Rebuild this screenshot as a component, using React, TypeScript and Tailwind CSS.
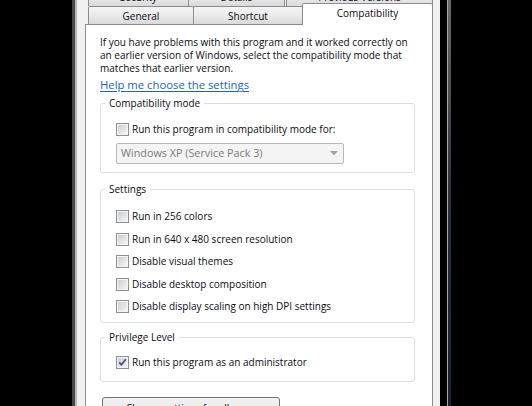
import React from 'react';

type CheckProps = { checked?: boolean };

const CheckBox: React.FC<CheckProps> = ({ checked = false }) => (
  <svg width="13" height="13" viewBox="0 0 13 13" className="shrink-0">
    <defs>
      <linearGradient id="cbFill" x1="0" y1="0" x2="1" y2="1">
        <stop offset="0" stopColor="#c9cdd3" />
        <stop offset="1" stopColor="#f6f6f6" />
      </linearGradient>
    </defs>
    <rect x="0.5" y="0.5" width="12" height="12" fill="#f4f4f4" stroke="#8e8f8f" />
    <rect x="2" y="2" width="9" height="9" fill="url(#cbFill)" />
    {checked && (
      <path d="M3.2 6.4 L5.4 8.8 L9.8 3.2" stroke="#3b4f86" strokeWidth="1.7" fill="none" />
    )}
  </svg>
);

const Option: React.FC<{ label: string; checked?: boolean }> = ({ label, checked }) => (
  <div className="flex items-center h-[13px] gap-[3px]">
    <CheckBox checked={checked} />
    <span className="whitespace-nowrap">{label}</span>
  </div>
);

const Group: React.FC<{ title: string; className?: string; children: React.ReactNode }> = ({
  title,
  className = '',
  children,
}) => (
  <fieldset className={`w-[315px] border border-[#d5dfe5] rounded-[3px] pl-[15px] ${className}`}>
    <legend className="ml-[-11px] px-[4px] leading-[13px]">{title}</legend>
    {children}
  </fieldset>
);

const tabIdle =
  'h-[18px] flex items-center justify-center border border-b-0 border-[#898c95] rounded-t-[2px] bg-linear-to-b from-[#f4f4f4] via-[#ebebeb] to-[#d9d9d9]';

export default function App() {
  const settings = [
    'Run in 256 colors',
    'Run in 640 x 480 screen resolution',
    'Disable visual themes',
    'Disable desktop composition',
    'Disable display scaling on high DPI settings',
  ];

  return (
    <div className="flex w-[532px] h-[406px] overflow-hidden bg-black text-[10px] text-[#0a0a14] font-['Open_Sans',sans-serif]">
      <div className="w-[72px] shrink-0" />
      <div className="w-[3px] shrink-0 bg-[#474747]" />
      <div className="w-[2px] shrink-0 bg-[#b9b9b9]" />

      <div className="w-[363px] shrink-0 bg-[#f0f0f0] pl-[8px] flex flex-col">
        {/* tab strip */}
        <div className="h-[24px] flex flex-col">
          <div className="h-[18px] mt-[-12px] flex pl-[3px] shrink-0">
            <div className={`${tabIdle} w-[101px]`}>Security</div>
            <div className={`${tabIdle} w-[97px] -ml-px`}>Details</div>
            <div className={`${tabIdle} w-[147px] ml-[1px]`}>Previous Versions</div>
          </div>
          <div className="h-[18px] flex items-end pl-[3px] shrink-0">
            <div className={`${tabIdle} w-[106px] pt-[2px]`}>General</div>
            <div className={`${tabIdle} w-[110px] -ml-px pt-[2px]`}>Shortcut</div>
            <div className="relative z-10 -ml-px -mb-px h-[22px] w-[131px] flex items-center justify-center pb-[2px] bg-white border border-b-0 border-[#898c95] rounded-t-[2px]">
              Compatibility
            </div>
          </div>
        </div>

        {/* page */}
        <div className="w-[348px] h-[420px] shrink-0 bg-white border border-[#898c95] pl-[14px] pt-[11px]">
          <p className="leading-[13px] whitespace-nowrap">
            If you have problems with this program and it worked correctly on
            <br />
            an earlier version of Windows, select the compatibility mode that
            <br />
            matches that earlier version.
          </p>
          <div className="mt-[3px] h-[13px] flex items-center">
            <span className="text-[11.3px] leading-[13px] text-[#1a63c0] underline underline-offset-[2px]">
              Help me choose the settings
            </span>
          </div>

          <Group title="Compatibility mode" className="mt-[6px] pt-[13px] pb-[8px]">
            <Option label="Run this program in compatibility mode for:" />
            <div className="mt-[7px] w-[228px] h-[21px] flex items-center justify-between pl-[4px] pr-[5px] bg-[#f4f4f4] border border-[#b5b9bc] rounded-[2px] text-[10.8px] text-[#7a7a7a]">
              <span>Windows XP (Service Pack 3)</span>
              <svg width="8" height="5" viewBox="0 0 8 5">
                <path d="M0 0 H8 L4 4.5 Z" fill="#a3a3a3" />
              </svg>
            </div>
          </Group>

          <Group title="Settings" className="mt-[10px] pt-[14px] pb-[9px]">
            <div className="flex flex-col gap-[9.5px]">
              {settings.map((s) => (
                <Option key={s} label={s} />
              ))}
            </div>
          </Group>

          <Group title="Privilege Level" className="mt-[8px] pt-[12px] pb-[12px]">
            <Option label="Run this program as an administrator" checked />
          </Group>

          <button className="mt-[15px] ml-[2px] w-[178px] h-[23px] flex items-center pl-[23px] border border-[#707070] rounded-[3px] bg-linear-to-b from-[#f2f2f2] via-[#ebebeb] to-[#d4d4d4]">
            Change settings for all users
          </button>
        </div>
      </div>

      <div className="w-[7px] shrink-0" />
      <div className="w-[1px] shrink-0 bg-[#a5a5a5]" />
      <div className="w-[3px] shrink-0 bg-linear-to-b from-[#6a6a6a] via-[#2c3037] to-[#1c2129]" />
      <div className="flex-1" />
    </div>
  );
}
